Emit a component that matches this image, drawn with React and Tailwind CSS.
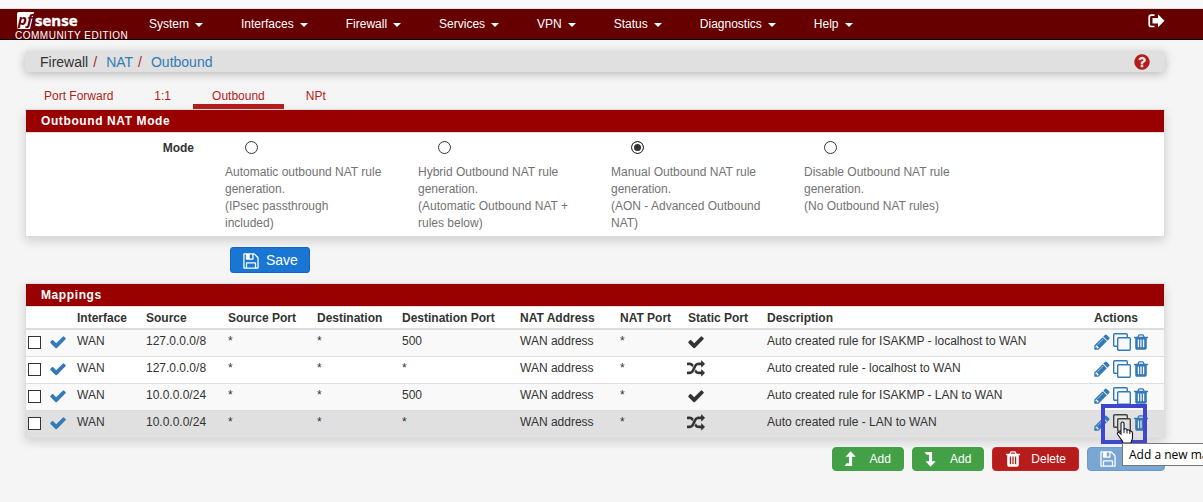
import React, { useState } from 'react';

const PATHS = {
  check: 'M1671 566q0 40-28 68l-724 724-136 136q-28 28-68 28t-68-28l-136-136-362-362q-28-28-28-68t28-68l136-136q28-28 68-28t68 28l294 295 656-657q28-28 68-28t68 28l136 136q28 28 28 68z',
  random: 'M666 481q-60 92-137 273-22-45-37-72.5t-40.5-63.5-51-56.5-63-35-81.5-14.5h-224q-14 0-23-9t-9-23v-192q0-14 9-23t23-9h224q250 0 410 225zm1126 799q0 14-9 23l-320 320q-9 9-23 9-13 0-22.5-9.5t-9.5-22.5v-192q-32 0-85 .5t-81 1-73-1-71-5-64-10.5-63-18.5-58-28.5-59-40-55-53.5-56-69.5q59-93 136-273 22 45 37 72.5t40.5 63.5 51 56.5 63 35 81.5 14.5h256v-192q0-14 9-23t23-9q12 0 24 10l319 319q9 9 9 23zm0-896q0 14-9 23l-320 320q-9 9-23 9-13 0-22.5-9.5t-9.5-22.5v-192h-256q-48 0-87 15t-69 45-51 61.5-45 77.5q-32 62-78 171-29 66-49.5 111t-54 105-64 100-74 83-90 68.5-106.5 42-128 16.5h-224q-14 0-23-9t-9-23v-192q0-14 9-23t23-9h224q48 0 87-15t69-45 51-61.5 45-77.5q32-62 78-171 29-66 49.5-111t54-105 64-100 74-83 90-68.5 106.5-42 128-16.5h256v-192q0-14 9-23t23-9q12 0 24 10l319 319q9 9 9 23z',
  pencil: 'M491 1536l91-91-235-235-91 91v107h128v128h107zm523-928q0-22-22-22-10 0-17 7l-542 542q-7 7-7 17 0 22 22 22 10 0 17-7l542-542q7-7 7-17zm-54-192l416 416-832 832h-416v-416zm683 96q0 53-37 90l-166 166-416-416 166-165q36-38 90-38 53 0 91 38l235 234q37 39 37 91z',
  trash: 'M704 1376v-704q0-14-9-23t-23-9h-64q-14 0-23 9t-9 23v704q0 14 9 23t23 9h64q14 0 23-9t9-23zm256 0v-704q0-14-9-23t-23-9h-64q-14 0-23 9t-9 23v704q0 14 9 23t23 9h64q14 0 23-9t9-23zm256 0v-704q0-14-9-23t-23-9h-64q-14 0-23 9t-9 23v704q0 14 9 23t23 9h64q14 0 23-9t9-23zm-544-992h448l-48-117q-7-9-17-11h-317q-10 2-17 11zm928 32v64q0 14-9 23t-23 9h-96v948q0 83-47 143.5t-113 60.5h-832q-66 0-113-58.5t-47-141.5v-952h-96q-14 0-23-9t-9-23v-64q0-14 9-23t23-9h309l70-167q15-37 54-63t79-26h320q40 0 79 26t54 63l70 167h309q14 0 23 9t9 23z',
  save: 'M512 1536h768v-384h-768v384zm896 0h128v-896q0-14-10-38.5t-20-34.5l-281-281q-10-10-34-20t-39-10v416q0 40-28 68t-68 28h-576q-40 0-68-28t-28-68v-416h-128v1280h128v-416q0-40 28-68t68-28h832q40 0 68 28t28 68v416zm-384-928v-320q0-13-9.5-22.5t-22.5-9.5h-192q-13 0-22.5 9.5t-9.5 22.5v320q0 13 9.5 22.5t22.5 9.5h192q13 0 22.5-9.5t9.5-22.5zm640 32v928q0 40-28 68t-68 28h-1344q-40 0-68-28t-28-68v-1344q0-40 28-68t68-28h928q40 0 88 20t76 48l280 280q28 28 48 76t20 88z',
  help: 'M1024 1376v-192q0-14-9-23t-23-9h-192q-14 0-23 9t-9 23v192q0 14 9 23t23 9h192q14 0 23-9t9-23zm256-672q0-88-55.5-163t-138.5-116-170-41q-243 0-371 213-15 24 8 42l132 100q7 6 19 6 16 0 25-12 53-68 86-92 34-24 86-24 48 0 85.5 26t37.5 59q0 38-20 61t-68 45q-63 28-115.5 86.5t-52.5 125.5v36q0 14 9 23t23 9h192q14 0 23-9t9-23q0-19 21.5-49.5t54.5-49.5q32-18 49-28.5t46-35 44.5-48 28-60.5 12.5-81zm384 192q0 209-103 385.5t-279.5 279.5-385.5 103-385.5-103-279.5-279.5-103-385.5 103-385.5 279.5-279.5 385.5-103 385.5 103 279.5 279.5 103 385.5z',
};

const Icon = ({ name, className }) => (
  <svg viewBox="0 0 1792 1792" fill="currentColor" className={`shrink-0 w-[18px] h-[18px] ${className || ''}`} aria-hidden="true">
    <path d={PATHS[name]} />
  </svg>
);

const CloneIcon = () => (
  <svg viewBox="0 0 18 18" fill="none" stroke="currentColor" strokeWidth="1.4" className="w-[18px] h-[18px] shrink-0" aria-hidden="true">
    <path d="M4 13.3H1.7a1 1 0 0 1-1-1V1.7a1 1 0 0 1 1-1h11.6a1 1 0 0 1 1 1V4" />
    <rect x="4.7" y="4.7" width="12.6" height="12.6" rx="1" />
  </svg>
);

const LevelIcon = ({ down }) => (
  <svg viewBox="0 0 12 16" fill="currentColor" className="w-3 h-4 shrink-0" aria-hidden="true">
    {down ? (
      <path d="M.5 1h7.6v9.2h3.6L6.600 15.700 1.500 10.200h3.500V3.800H2.600z" />
    ) : (
      <path d="M.5 15h7.600V5.800h3.600L6.600.300 1.500 5.800h3.500v6.400H2.600z" />
    )}
  </svg>
);

const Logo = () => (
  <a href="#home" className="flex flex-col w-[134px] pl-[15px] pt-[2px] text-white">
    <svg viewBox="0 0 66 20" className="w-[66px] h-5 overflow-visible" role="img" aria-label="pfsense">
      <path d="M4 1h15l-4 17H4a2 2 0 0 1-2-2V3a2 2 0 0 1 2-2z" fill="#fff" />
      <text x="3" y="14" fontSize="15" fontWeight="bold" fontStyle="italic" fontFamily="Open Sans, sans-serif" fill="#600">pf</text>
      <text x="20" y="15" fontSize="15" fontWeight="bold" fontFamily="Open Sans, sans-serif" fill="#fff" stroke="#fff" strokeWidth=".4">sense</text>
    </svg>
    <span className="text-[10px] leading-[9px] tracking-wider whitespace-nowrap">COMMUNITY EDITION</span>
  </a>
);

const MENU = ['System', 'Interfaces', 'Firewall', 'Services', 'VPN', 'Status', 'Diagnostics', 'Help'];
const TABS = ['Port Forward', '1:1', 'Outbound', 'NPt'];

const MODES = [
  { id: 'automatic', title: 'Automatic outbound NAT rule generation.', note: '(IPsec passthrough\nincluded)' },
  { id: 'hybrid', title: 'Hybrid Outbound NAT rule generation.', note: '(Automatic Outbound NAT +\nrules below)' },
  { id: 'advanced', title: 'Manual Outbound NAT rule generation.', note: '(AON - Advanced Outbound\nNAT)' },
  { id: 'disabled', title: 'Disable Outbound NAT rule generation.', note: '(No Outbound NAT rules)' },
];

const RULES = [
  { source: '127.0.0.0/8', dport: '500', fixed: true, descr: 'Auto created rule for ISAKMP - localhost to WAN' },
  { source: '127.0.0.0/8', dport: '*', fixed: false, descr: 'Auto created rule - localhost to WAN' },
  { source: '10.0.0.0/24', dport: '500', fixed: true, descr: 'Auto created rule for ISAKMP - LAN to WAN' },
  { source: '10.0.0.0/24', dport: '*', fixed: false, descr: 'Auto created rule - LAN to WAN' },
];

const Panel = ({ title, children }) => (
  <section className="border border-[#ddd] bg-white shadow-[0_4px_10px_rgba(0,0,0,0.15)]">
    <h2 className="bg-[#900] text-white font-bold text-xs leading-[22px] pl-[15px] tracking-wider border-b border-[#ddd]">{title}</h2>
    {children}
  </section>
);

const HoverHint = () => (
  <>
    <div className="absolute left-[7px] -top-[7px] w-[46px] h-10 border-4 border-[#3f48cc]" />
    <div className="absolute z-10 left-7 top-8 w-[200px] h-[23px] border border-[#767676] bg-white pl-[6px] text-xs leading-[22px] text-black font-['Open_Sans',sans-serif] whitespace-nowrap">
      Add a new ma
    </div>
    <svg viewBox="0 0 18 24" className="absolute left-[22px] top-[10px] w-[18px] h-6" aria-hidden="true">
      <path d="M5 2.500a1.500 1.500 0 0 1 3 0V8c2-.8 3 .2 3 1 1.500-.6 2.500.2 2.800 1.200 1.700-.4 2.700.5 2.700 2V17c0 2-1.500 3-1.500 5H7c0-2-2-3.500-3.200-5.500L1.500 13.300c-.8-1.400.8-2.500 2-1.500L5 13z" fill="#fff" stroke="#112" strokeWidth="1.1" />
      <path d="M8 8v4M11 9v3.500M13.800 10.500V13" stroke="#112" fill="none" />
    </svg>
  </>
);

const App = () => {
  const [mode, setMode] = useState('advanced');

  return (
    <div className="min-h-screen overflow-hidden bg-[#f5f5f5] text-[#333] text-xs font-['Liberation_Sans',Arial,sans-serif]">
      <div className="h-[9px] bg-[#f9f9f9] border-b border-[#e0e0e0]" />
      <header className="flex h-[31px] bg-[#600] border-b border-black text-white">
        <Logo />
        <nav className="flex gap-[38px] pl-[15px] leading-[30px]">
          {MENU.map((item) => (
            <a key={item} href={`#${item.toLowerCase()}`} className="flex items-center gap-[6px]">
              {item}
              <span className="mt-[2px] border-x-4 border-t-4 border-x-transparent border-t-white" />
            </a>
          ))}
        </nav>
        <a href="#logout" aria-label="Logout" className="ml-auto mr-[38px] pt-[5px]">
          <svg viewBox="0 0 17 14" className="w-[17px] h-[14px]" aria-hidden="true">
            <path d="M6.500 1.200H3.200a2 2 0 0 0-2 2v7.300a2 2 0 0 0 2 2h3.300" fill="none" stroke="#fff" strokeWidth="1.7" />
            <path d="M4.500 4H10V.3l6.500 6.500L10 13.300V9.600H4.500z" fill="#fff" />
          </svg>
        </a>
      </header>

      <main className="pl-[25px] pr-[38px] pt-[11px]">
        <div className="flex items-center justify-between h-[21px] pl-[15px] pr-[14px] rounded-sm bg-[#e0e0e0] text-sm shadow-[0_2px_10px_rgba(0,0,0,0.25)]">
          <ol className="flex">
            <li>Firewall<span className="text-[#b71c1c] pl-[5px] pr-[9px]">/</span></li>
            <li><a href="#nat" className="text-[#337ab7]">NAT</a><span className="text-[#b71c1c] pl-[5px] pr-[9px]">/</span></li>
            <li><a href="#outbound" className="text-[#337ab7]">Outbound</a></li>
          </ol>
          <a href="#help" aria-label="Help" className="text-[#b71c1c]"><Icon name="help" /></a>
        </div>

        <nav className="flex gap-[3px] mt-3 leading-[20px]">
          {TABS.map((tab) => (
            <a
              key={tab}
              href={`#tab-${tab}`}
              className={`h-[25px] px-[19px] pt-[2px] text-[#b71c1c] border-b-[5px] ${tab === 'Outbound' ? 'border-[#b71c1c]' : 'border-transparent'}`}
            >
              {tab}
            </a>
          ))}
        </nav>

        <Panel title="Outbound NAT Mode">
          <div role="radiogroup" aria-labelledby="mode-label" className="flex pt-2 pb-1">
            <div id="mode-label" className="w-[168px] mr-[31px] text-right font-bold leading-[14px]">Mode</div>
            <div className="grid grid-cols-[repeat(4,193px)]">
              {MODES.map(({ id, title, note }) => (
                <label key={id} className="pr-[30px] text-[#737373] leading-[17px] whitespace-pre-line">
                  <input
                    type="radio"
                    name="mode"
                    checked={mode === id}
                    onChange={() => setMode(id)}
                    className="block appearance-none w-[13px] h-[13px] ml-5 mb-[10px] rounded-full border border-[#333] bg-white checked:bg-[#333] checked:shadow-[inset_0_0_0_2px_#fff]"
                  />
                  {title}
                  <br />
                  {note}
                </label>
              ))}
            </div>
          </div>
        </Panel>

        <button type="button" className="flex items-center gap-[6px] h-[26px] mt-[10px] mb-[10px] ml-[205px] px-[11px] rounded-[3px] border border-[#1565c0] bg-[#1976d2] text-white text-sm">
          <Icon name="save" className="mt-[2px]" />
          Save
        </button>

        <Panel title="Mappings">
          <table className="w-full table-fixed text-left">
            <colgroup>
              <col className="w-6" />
              <col className="w-[27px]" />
              <col className="w-[69px]" />
              <col className="w-[82px]" />
              <col className="w-[89px]" />
              <col className="w-[85px]" />
              <col className="w-[118px]" />
              <col className="w-[100px]" />
              <col className="w-[68px]" />
              <col className="w-[79px]" />
              <col />
              <col className="w-[70px]" />
            </colgroup>
            <thead>
              <tr className="h-[22px] border-b-2 border-[#ddd]">
                <th /><th />
                <th>Interface</th>
                <th>Source</th>
                <th>Source Port</th>
                <th>Destination</th>
                <th>Destination Port</th>
                <th>NAT Address</th>
                <th>NAT Port</th>
                <th>Static Port</th>
                <th>Description</th>
                <th>Actions</th>
              </tr>
            </thead>
            <tbody>
              {RULES.map((rule, idx) => {
                const last = idx === RULES.length - 1;
                return (
                  <tr key={idx} className={`h-[27px] [&>td]:pb-[3px] ${last ? 'bg-[#e0e0e0]' : 'border-b border-[#ddd] odd:bg-[#f9f9f9]'}`}>
                    <td className="pl-[2px]">
                      <input type="checkbox" aria-label={rule.descr} className="block mt-[3px] appearance-none w-[13px] h-[13px] border border-[#333] bg-white" />
                    </td>
                    <td><Icon name="check" className="-ml-px mt-[2px] text-[#337ab7]" /></td>
                    <td>WAN</td>
                    <td>{rule.source}</td>
                    <td>*</td>
                    <td>*</td>
                    <td>{rule.dport}</td>
                    <td>WAN address</td>
                    <td>*</td>
                    <td><Icon name={rule.fixed ? 'check' : 'random'} className="-ml-px mt-[2px]" /></td>
                    <td>{rule.descr}</td>
                    <td className="relative">
                      <div className="flex items-center -ml-px mt-[2px] text-[#337ab7]">
                        <a href="#edit" aria-label="Edit" className="mr-[2px]"><Icon name="pencil" /></a>
                        <a href="#copy" aria-label="Copy" className={last ? 'text-[#444]' : ''}><CloneIcon /></a>
                        <a href="#remove" aria-label="Remove" className="ml-px"><Icon name="trash" /></a>
                      </div>
                      {last && <HoverHint />}
                    </td>
                  </tr>
                );
              })}
            </tbody>
          </table>
        </Panel>

        <div className="flex justify-end gap-2 mt-[9px] text-white">
          <button type="button" className="flex items-center gap-[14px] h-6 pl-[11px] pr-3 rounded-sm border border-[#43a047] bg-[#43a047]">
            <LevelIcon />Add
          </button>
          <button type="button" className="flex items-center gap-[14px] h-6 pl-[11px] pr-3 rounded-sm border border-[#43a047] bg-[#43a047]">
            <LevelIcon down />Add
          </button>
          <button type="button" className="flex items-center gap-[9px] h-6 pl-[11px] pr-3 rounded-sm border border-[#c62828] bg-[#b71c1c]">
            <Icon name="trash" />Delete
          </button>
          <button type="button" disabled aria-label="Save order" className="flex items-center w-[78px] h-6 pl-[11px] pr-3 rounded-sm border border-[#6b9bc9] bg-[#79a6d2]">
            <Icon name="save" />
          </button>
        </div>
      </main>
    </div>
  );
};

export default App;
